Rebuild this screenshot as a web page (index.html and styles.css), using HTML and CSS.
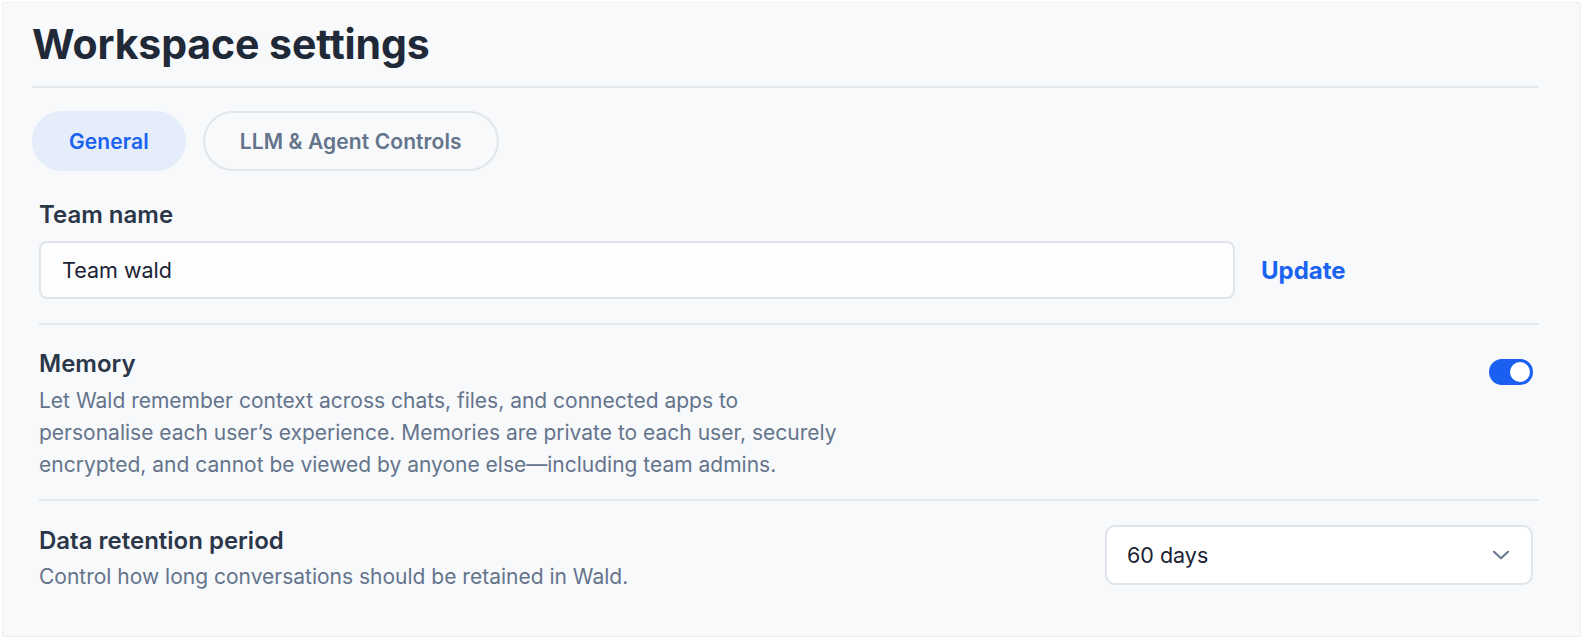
FILE: index.html
```html
<!DOCTYPE html>
<html lang="en">
<head>
<meta charset="utf-8">
<title>Workspace settings</title>
<link rel="stylesheet" href="styles.css">
</head>
<body>
<main class="page">
  <header class="page-header">
    <h1 class="page-title">Workspace settings</h1>
  </header>

  <nav class="tabs">
    <button class="tab tab-active" type="button">General</button>
    <button class="tab" type="button">LLM &amp; Agent Controls</button>
  </nav>

  <section class="section section-team">
    <label class="label" for="team-name">Team name</label>
    <div class="team-row">
      <div class="input" id="team-name">Team wald</div>
      <button class="link-button" type="button">Update</button>
    </div>
  </section>

  <section class="section setting">
    <div class="setting-text">
      <h2 class="label">Memory</h2>
      <p class="desc desc-wide">Let Wald remember context across chats, files, and connected apps to personalise each user’s experience. Memories are private to each user, securely encrypted, and cannot be viewed by anyone else—including team admins.</p>
    </div>
    <div class="toggle" role="switch" aria-checked="true"><span class="knob"></span></div>
  </section>

  <section class="section setting setting-last">
    <div class="setting-text">
      <h2 class="label">Data retention period</h2>
      <p class="desc">Control how long conversations should be retained in Wald.</p>
    </div>
    <div class="select">
      <span>60 days</span>
      <svg class="chevron" width="18" height="10" viewBox="0 0 18 10" fill="none" stroke="currentColor" stroke-width="2.2" stroke-linecap="round" stroke-linejoin="round"><path d="M2 1.8L9 8.2L16 1.8"/></svg>
    </div>
  </section>
</main>
</body>
</html>
```

FILE: styles.css
```css
* { box-sizing: border-box; }

html, body {
  margin: 0;
  padding: 0;
  background: #ffffff;
  height: 100%;
  overflow: hidden;
}

body {
  font-family: Inter, "Noto Sans", "Liberation Sans", sans-serif;
  color: #1e293b;
  padding: 2px 1px 4px 2px;
  display: flex;
  flex-direction: column;
}

.page {
  flex: 1;
  background: #f8f9fb;
  border: 1px solid #eceef2;
  border-radius: 2px;
  padding: 0 41px 0 29px;
}

.page-header {
  border-bottom: 2px solid #e3e7ee;
  padding: 17px 0 18px;
}

.page-title {
  margin: 0;
  font-size: 41px;
  line-height: 48px;
  font-weight: 700;
  color: #1f2937;
  letter-spacing: -0.1px;
}

.tabs {
  display: flex;
  gap: 17px;
  padding-top: 23px;
}

.tab {
  font-family: inherit;
  height: 60px;
  border-radius: 30px;
  font-size: 21px;
  font-weight: 600;
  padding: 0 35px;
  border: 2px solid #e2e5ea;
  background: transparent;
  color: #64748b;
  letter-spacing: 0.1px;
}

.tab-active {
  background: #e5edfb;
  border-color: #e5edfb;
  color: #1a62f0;
}

.section {
  margin: 0 0 0 7px;
}

.section-team {
  padding-top: 28px;
  padding-bottom: 24px;
  border-bottom: 2px solid #e3e7ee;
}

.label {
  display: block;
  margin: 0;
  font-size: 24px;
  line-height: 32px;
  font-weight: 600;
  color: #2b3648;
}

.team-row {
  display: flex;
  align-items: center;
  margin-top: 10px;
}

.input {
  width: 1196px;
  height: 58px;
  border: 2px solid #e0e4eb;
  border-radius: 8px;
  background: #fdfdfe;
  padding: 0 21px;
  display: flex;
  align-items: center;
  font-size: 21.5px;
  color: #1a2233;
}

.link-button {
  font-family: inherit;
  margin-left: 26px;
  background: none;
  border: 0;
  padding: 0;
  font-size: 24px;
  font-weight: 700;
  color: #1a62f0;
}

.setting {
  display: flex;
  justify-content: space-between;
  align-items: flex-start;
  padding: 23px 6px 18px 0;
  border-bottom: 2px solid #e3e7ee;
}

.setting-last {
  border-bottom: 0;
  padding-top: 24px;
}

.setting-text .label {
  margin-bottom: 5px;
}

.setting-last .setting-text .label {
  margin-bottom: 4px;
}

.desc {
  margin: 0;
  font-size: 21px;
  line-height: 32px;
  color: #64748b;
}

.desc-wide {
  max-width: 817px;
}

.toggle {
  margin-top: 11px;
  width: 44px;
  height: 26px;
  border-radius: 13px;
  background: #1a5ff0;
  position: relative;
}

.knob {
  position: absolute;
  top: 3px;
  right: 3px;
  width: 20px;
  height: 20px;
  border-radius: 50%;
  background: #ffffff;
}

.select {
  width: 428px;
  height: 60px;
  border: 2px solid #e0e4eb;
  border-radius: 10px;
  background: #ffffff;
  display: flex;
  align-items: center;
  justify-content: space-between;
  padding: 0 21px 0 20px;
  font-size: 21.5px;
  color: #1a2233;
}

.chevron {
  color: #6b7a90;
}
```
